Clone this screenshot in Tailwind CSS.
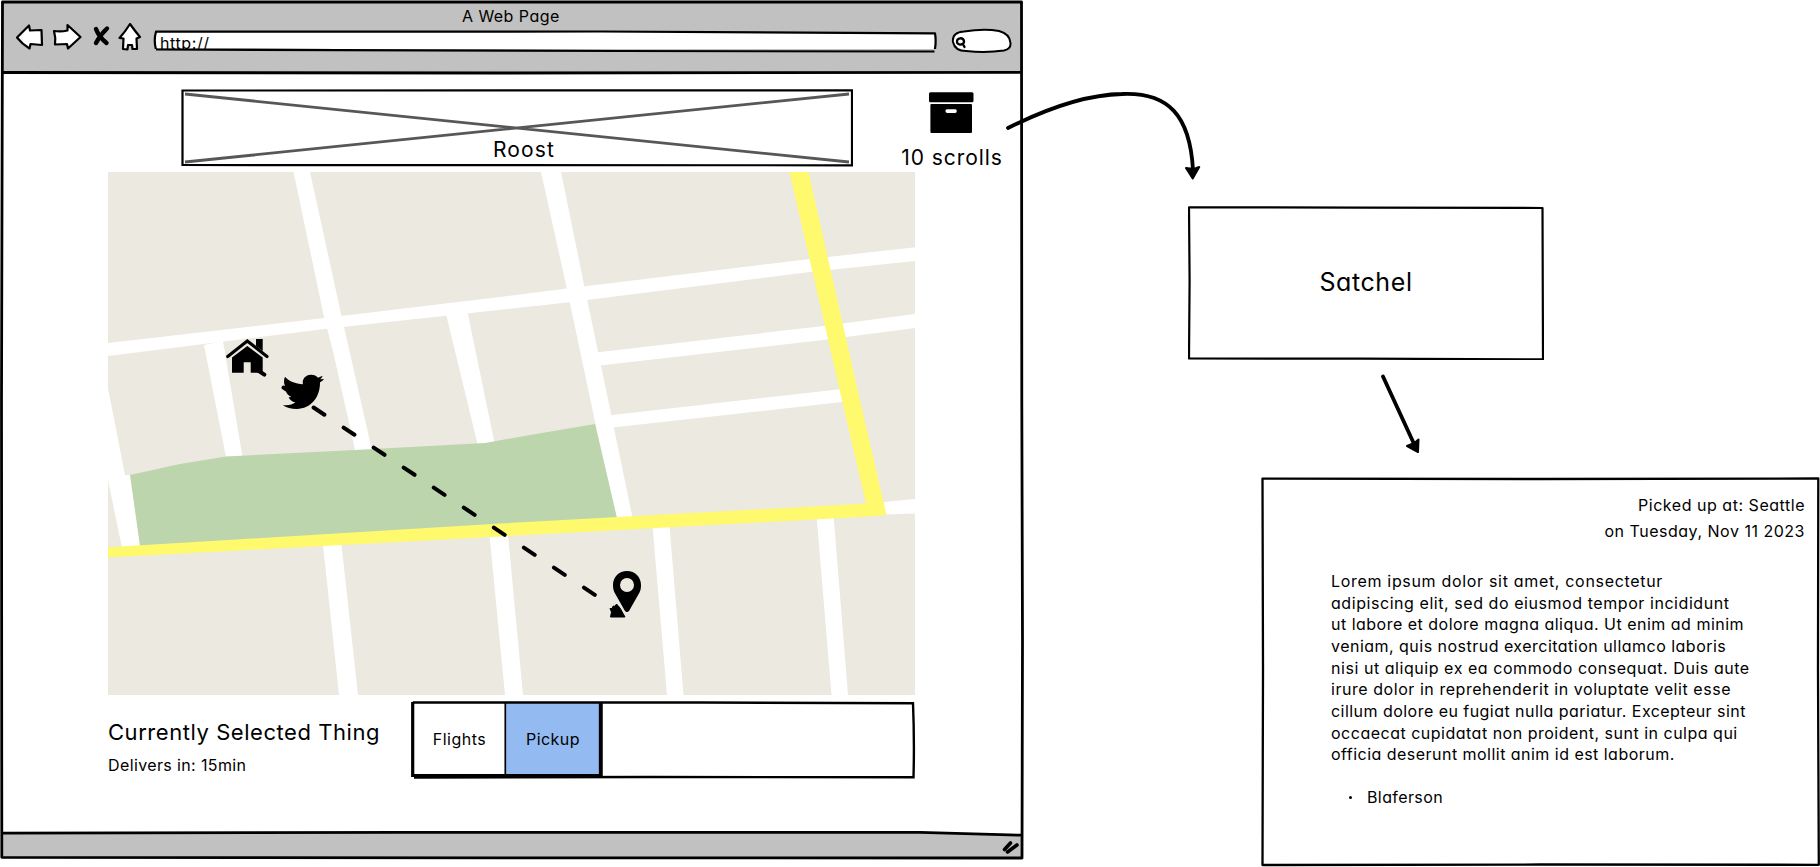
<!DOCTYPE html>
<html lang="en">
<head>
<meta charset="utf-8">
<title>Roost wireframe</title>
<script src="https://cdn.jsdelivr.net/npm/@tailwindcss/browser@4"></script>
</head>
<body class="relative flex h-[867px] w-[1820px] overflow-hidden bg-white font-['Inter',sans-serif] text-[16px] text-black [font-feature-settings:'cv11','calt'_0]">

<!-- Browser window -->
<section class="relative flex h-[860px] w-[1024px] flex-none flex-col">
  <svg class="absolute inset-0" width="1024" height="860" fill="none" stroke="#000" stroke-width="2.8" stroke-linejoin="round">
    <path d="M2 2H1022V73L2 73Z" fill="#c1c1c1" stroke="none"/>
    <path d="M2 833L930 832.3L1022 835V858H2Z" fill="#c1c1c1" stroke="none"/>
    <path d="M2.500 2H1021.500L1021.800 400L1022.500 640L1022 858L500 857.900L1.800 857.300L1.500 400Z"/>
    <path d="M2 72.500L500 73L1022 72.300M2 833.200L400 832.300L920 832.300L1022 835.200"/>
    <path d="M1004.500 849.500L1010.500 843M1007.500 852L1017 845" stroke-width="3.600" stroke-linecap="round"/>
  </svg>

  <header class="relative h-[73px] pt-[6px]">
    <h1 class="h-[17px] pl-[462px] leading-5 tracking-[0.45px] whitespace-nowrap">A Web Page</h1>
    <nav class="flex items-start pl-[15px]">
      <svg width="30" height="30" viewBox="15 23 30 30" fill="#fff" stroke="#000" stroke-width="2.200" stroke-linejoin="round"><path d="M17 37.500L29 25.500L30 30.500L41.500 30L42 45L30.500 44L29.500 48.500Q22 44 17 37.500Z"/></svg>
      <svg class="ml-[7px]" width="31" height="30" viewBox="52 23 31 30" fill="#fff" stroke="#000" stroke-width="2.200" stroke-linejoin="round"><path d="M54 31Q61 32 67.500 30.500L67.500 25L80.500 37L68 48.500L67 44L55 44.500Q56 38 54 31Z"/></svg>
      <svg class="ml-[9px]" width="20" height="30" viewBox="92 23 20 30" fill="none" stroke="#000" stroke-width="4.400" stroke-linecap="round"><path d="M96 29Q99 37 106.500 43M107 28.500Q100 35 96 43"/></svg>
      <svg class="ml-[5px]" width="26" height="30" viewBox="117 23 26 30" fill="#fff" stroke="#000" stroke-width="2.200" stroke-linejoin="round"><path d="M130 24Q135 31 140 37L136.500 38.500L137 49L132.500 49L132 45L128 45L127.500 49.500L123 49L123.500 38.500L119.500 38Q125 32 130 24Z"/></svg>
      <div class="relative ml-[10px] h-[25.500px] w-[785px] overflow-hidden pt-[10px] pl-[7px] leading-5">
        <svg class="absolute top-0 left-0" width="785" height="30" viewBox="153 23 785 30" fill="#fff" stroke="#000" stroke-width="2.200" stroke-linejoin="round"><path d="M156 31.700L600 31.500L935 33.300Q936.500 42 934.500 51.500L620 51L156 49.500Q153.500 40 156 31.700Z"/></svg>
        <span class="relative tracking-[0.6px] whitespace-nowrap">http://</span>
      </div>
      <svg class="ml-[13px]" width="62" height="31" viewBox="951 23 62 31" fill="#fff" stroke="#000" stroke-width="2" stroke-linejoin="round" stroke-linecap="round"><path d="M953 42C952 35 957 32 964 31.500Q984 28.500 999 31Q1010 34 1010.500 43Q1011 49 1004 50.500Q986 53 966 51Q955 51 953 42Z"/><path d="M957 42C956.500 37.500 963 37 964 41C964.500 45 957.500 46 957 42M963 44L964.500 47" stroke-width="2.300"/></svg>
    </nav>
    <svg class="absolute top-0 left-0" width="1024" height="56" fill="none" stroke="#000" stroke-width="2.200"><path d="M156 49.500L620 51L934.500 51.500"/></svg>
  </header>

  <div class="relative flex h-[99px] pt-[16px] pl-[181px]">
    <div class="relative flex h-[78px] w-[672px] items-end justify-center pb-[7px] pl-[14px]">
      <svg class="absolute inset-0" width="672" height="78" viewBox="181 89 672 78" fill="none" stroke="#000" stroke-width="2.200"><path d="M185 94L849 162M185 162L849 94" stroke="#575757" stroke-width="2.800"/><path d="M182.500 90.500L852 90.300V165.300L182.500 165Z"/></svg>
      <span class="relative text-[21px] leading-5 tracking-[1.100px] whitespace-nowrap">Roost</span>
    </div>
    <div class="ml-[48px] flex w-[102px] flex-col items-center pt-[3px]">
      <svg class="mr-[2px]" width="45" height="42" viewBox="929 92 45 42"><rect x="929" y="92.300" width="44.500" height="9.900" rx="1.500"/><path fill-rule="evenodd" d="M931.500 104H971Q972 104 972 105V132Q972 133 971 133H931.500Q930.400 133 930.400 132V105Q930.400 104 931.500 104ZM947 109.200Q945.400 109.200 945.400 111T947 112.900H955.200Q956.800 112.900 956.800 111T955.200 109.200Z"/></svg>
      <span class="mt-[14px] text-[21px] leading-5 tracking-[0.950px] whitespace-nowrap">10 scrolls</span>
    </div>
  </div>

  <!-- Street map with the delivery route -->
  <svg class="relative ml-[108px] flex-none" width="807" height="523" viewBox="108 172 807 523">
    <path fill="#ece9e1" d="M108 172H915V695H108Z"/>
    <g fill="#fff">
      <path d="M293.500 172H310L341.700 317L371.700 449V452H355.500L333 351L324 317Z"/>
      <path d="M108 343L333 317L520 294.500L567 288.500L810 259L915 247.300V261L810 272L567 302.500L333 328L108 356Z"/>
      <path d="M204 345L223 341L242.500 457H226Z"/>
      <path d="M108 388L125 475H131L140.500 548H122L108 480Z"/>
      <path d="M446 314L467 310L495 445L478 446Z"/>
      <path d="M541 172H561L584.500 287L611.700 417L633 520H617L594 417L566.500 287Z"/>
      <path d="M596 352.500L823 326L915 314V328L823 340L596 366Z"/>
      <path d="M608 415.500L842 389V402L608 428Z"/>
      <path d="M884 502L915 499V513.500L884 514.500Z"/>
      <path d="M323 545H341.500L358 695H339Z"/>
      <path d="M489.500 535H508L523 695H505Z"/>
      <path d="M652.500 526H669.500L683.500 695H667Z"/>
      <path d="M816.500 515H833.500L848 695H831.500Z"/>
    </g>
    <path fill="#bcd5ac" d="M130 475L180 464L226 456.500L355 450L485 443L530 435L595 424L617 518L140 546Z"/>
    <path fill="#fff96e" d="M108 547.300L500 523.500L866 503.500L841 396L789.500 172H808.500L859 396L886.500 515L865 516.700L500 536.500L108 557.500Z"/>
    <path fill="none" stroke="#000" stroke-width="4" stroke-linecap="round" stroke-dasharray="13 23.100" d="M253.500 367.500L614.500 608"/>
    <path d="M616.500 604L620 608L625 617H610.500L611.500 612L610 608.500L613.500 608.500Z" stroke="#000" stroke-linejoin="round"/>
    <!-- home -->
    <path d="M232 357.500L247.300 346L262.700 357.500V372.700H250.700V362.300H243.700V372.700H232Z"/>
    <path d="M256 339H262.700V351L256 346Z"/>
    <path fill="none" stroke="#000" stroke-width="3.100" stroke-linecap="round" d="M227.700 356.500L247.300 341L267 356.500"/>
    <!-- bird -->
    <path transform="translate(210 325) scale(.33333)" d="M225 155C236 168 256 176 279 178C275 162 288 149 303 149.500C313 150 319 153 324 158L338 152C336 158 333 161 330 163L342 162C338 167 334 170 330 172C331 216 303 252 260 252C244 252 228 248 218 240C233 243 247 239 256 232C246 231 239 225 236 217L244 216C235 212 230 206 228 199L233 200C224 195 219 190 218 183L225 183C221 174 221 164 225 155Z"/>
    <!-- pin -->
    <path fill-rule="evenodd" d="M627 571C635 571 641 577 641 585C641 588.500 640.500 590.500 639.500 592.500L629.300 610.500Q627 613.500 624.700 610.500L614.500 592.500C613.500 590.500 613 588.500 613 585C613 577 619 571 627 571ZM627 578A7 7 0 1 0 627 592A7 7 0 1 0 627 578Z"/>
  </svg>

  <div class="relative flex h-[138px] pt-[6px] pl-[108px]">
    <div class="w-[303px] pt-[19px]">
      <p class="text-[22px] leading-6 tracking-[0.550px] whitespace-nowrap">Currently Selected Thing</p>
      <p class="mt-[10.500px] leading-5 tracking-[0.380px] whitespace-nowrap">Delivers in: 15min</p>
    </div>
    <div class="relative flex h-[78px] w-[505px] pb-[2px] pl-[2px]">
      <svg class="absolute inset-0" width="505" height="78" viewBox="411 701 505 78" fill="none" stroke="#000" stroke-width="2.400"><path fill="#94baf2" stroke="none" d="M505.500 703H600V775H505.500Z"/><path d="M412.700 702.500L700 702.500L913 703.300Q914.500 740 913.500 777.300L650 777L414 777.500"/><path d="M505.300 703V775" stroke-width="1.700"/><path d="M412.700 702V775.500H601" stroke-width="3.200"/><path d="M600.800 703V777" stroke-width="3.900"/></svg>
      <div class="relative flex w-[93px] items-center justify-center tracking-[0.500px] whitespace-nowrap">Flights</div>
      <div class="relative flex w-[94px] items-center justify-center tracking-[0.450px] whitespace-nowrap">Pickup</div>
    </div>
  </div>
</section>

<!-- Satchel flow -->
<section class="flex flex-1 flex-col pt-[206px] pl-[164px]">
  <div class="relative flex h-[154px] w-[356px] items-center justify-center pb-[2px]">
    <svg class="absolute inset-0" width="356" height="154" viewBox="1188 206 356 154" fill="none" stroke="#000" stroke-width="2.200" stroke-linejoin="round"><path d="M1189 207.300L1360 207.600L1542.500 208L1543 359.300L1360 358.700L1189 358.400L1189.600 280Z"/></svg>
    <span class="relative text-[25px] leading-8 tracking-[0.600px] whitespace-nowrap">Satchel</span>
  </div>
  <article class="relative mt-[117px] ml-[73px] h-[390px] w-[559px]">
    <svg class="absolute inset-0" width="559" height="390" viewBox="1261 477 559 390" fill="none" stroke="#000" stroke-width="2.300" stroke-linejoin="round"><path d="M1262.500 478.600L1540 479L1818.300 478.500L1818 670L1818.800 864.800L1540 864.500L1262.500 865L1263 670Z"/></svg>
    <div class="relative pt-[15px] pr-[15px] text-right leading-[26px] whitespace-nowrap">
      <p class="tracking-[0.530px]">Picked up at: Seattle</p>
      <p class="tracking-[0.510px]">on Tuesday, Nov 11 2023</p>
    </div>
    <div class="relative mt-[27px] pl-[70px] leading-[21.650px] whitespace-nowrap">
      <p class="tracking-[0.680px]">Lorem ipsum dolor sit amet, consectetur</p>
      <p class="tracking-[0.560px]">adipiscing elit, sed do eiusmod tempor incididunt</p>
      <p class="tracking-[0.490px]">ut labore et dolore magna aliqua. Ut enim ad minim</p>
      <p class="tracking-[0.480px]">veniam, quis nostrud exercitation ullamco laboris</p>
      <p class="tracking-[0.550px]">nisi ut aliquip ex ea commodo consequat. Duis aute</p>
      <p class="tracking-[0.550px]">irure dolor in reprehenderit in voluptate velit esse</p>
      <p class="tracking-[0.460px]">cillum dolore eu fugiat nulla pariatur. Excepteur sint</p>
      <p class="tracking-[0.500px]">occaecat cupidatat non proident, sunt in culpa qui</p>
      <p class="tracking-[0.470px]">officia deserunt mollit anim id est laborum.</p>
      <ul class="mt-[21px] pl-[18px]"><li class="flex items-center gap-[15px] tracking-[0.400px]"><i class="size-[3px] rounded-full bg-black"></i>Blaferson</li></ul>
    </div>
  </article>
</section>

<!-- Connectors -->
<svg class="pointer-events-none absolute inset-0" width="1820" height="867" fill="none" stroke="#000" stroke-width="3.800" stroke-linecap="round" stroke-linejoin="round">
  <path d="M1008 128C1050 107 1090 94.500 1122 94C1168 92 1190 115 1193 170M1383 376.500L1415 446"/>
  <path fill="#000" stroke-width="2" d="M1186 168L1192.700 178.500L1199.200 167L1194 169ZM1407 446L1418 452L1418.500 439.500L1414.500 443Z"/>
</svg>
</body>
</html>
